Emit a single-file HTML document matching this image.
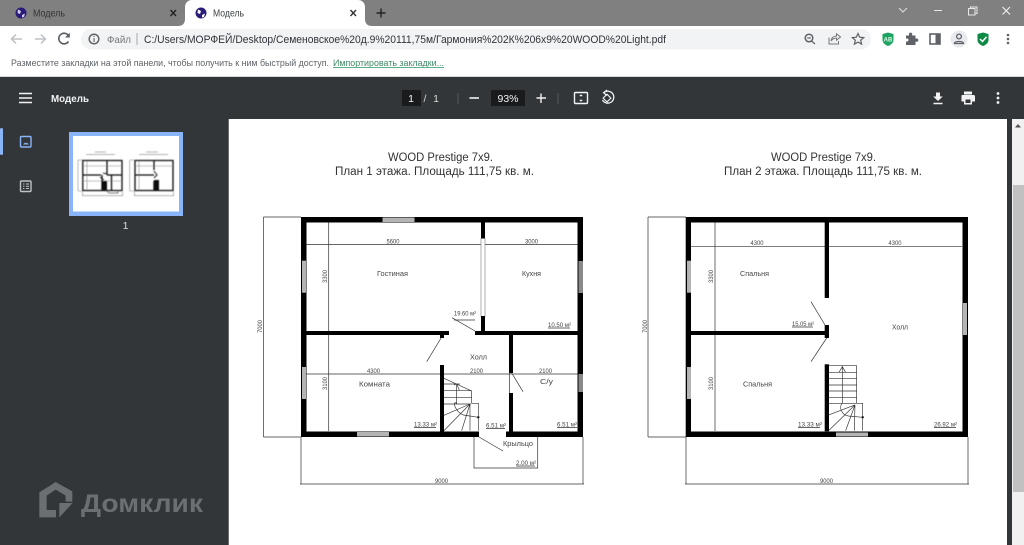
<!DOCTYPE html>
<html lang="ru">
<head>
<meta charset="utf-8">
<title>Модель</title>
<style>
html,body{margin:0;padding:0;background:#fff;overflow:hidden;width:1024px;height:545px}
svg{display:block;filter:blur(.3px)}
text{font-family:"Liberation Sans","DejaVu Sans",sans-serif}
.t{font-size:8px;fill:#555;text-anchor:start}
.d{font-size:6px;fill:#444}
.r{font-size:7.5px;fill:#444}
.ttl{font-size:11.5px;fill:#333}
.l{stroke:#333;stroke-width:.7;fill:none}
.ic{stroke:#5f6368;stroke-width:1.5;fill:none}
</style>
</head>
<body>
<svg width="1024" height="545" viewBox="0 0 1024 545" xmlns="http://www.w3.org/2000/svg">
<defs>
<filter id="soft" x="-5%" y="-5%" width="110%" height="110%"><feGaussianBlur stdDeviation=".45"/></filter>
<g id="p1">
  <g class="l">
    <path d="M263.500 217H301M263.500 217V437M263.500 437H301M301 437V484M583 437V484M300 484H584"/>
    <path d="M306 244.500H578M306 374H578M328.700 222V431"/>
    <path d="M452 317.700L475 331M441.700 337L426.700 361.700M511.700 373L523 391.700M479 437L503 451"/>
    <path d="M474 437V468H537.700V437"/>
    <path d="M509.500 373V393"/>
  </g>
  <path fill="#000" d="M301 217h282v220h-77v-5.500h71.500V222.500H306.500V431.500H479V437H301Z"/>
  <rect x="481" y="222" width="4" height="16.500" fill="#000"/>
  <rect x="481" y="238.500" width="4" height="78" fill="#fff" stroke="#777" stroke-width=".6"/>
  <rect x="481" y="316" width="4" height="17" fill="#000"/>
  <rect x="306" y="331" width="143" height="4" fill="#000"/>
  <rect x="475" y="331" width="103" height="4" fill="#000"/>
  <rect x="440" y="335" width="4" height="3" fill="#000"/>
  <rect x="509" y="335" width="4" height="38" fill="#000"/>
  <rect x="509" y="393" width="4" height="39" fill="#000"/>
  <rect x="440" y="365" width="4" height="67" fill="#000"/>
  <g fill="#b4b4b4">
    <rect x="382.500" y="217.500" width="32" height="4.500"/>
    <rect x="302" y="260.700" width="4" height="32"/>
    <rect x="302" y="367" width="4" height="32"/>
    <rect x="357" y="432" width="32" height="4.500"/>
  </g>
  <g fill="#8a8a8a">
    <rect x="578.500" y="261" width="4.500" height="32"/>
    <rect x="578.500" y="374" width="4.500" height="18"/>
  </g>
  <g transform="translate(255 340) scale(.3333)" fill="none" stroke="#333" stroke-width="2">
    <path d="M567 115L650 153V190H670V272M567 132H615M567 152H650M567 172H650M567 192H648M605 132V192"/>
    <path d="M645 192L567 272M645 192L567 226M645 192L620 272M645 192L645 272M597 135L605 132L613 150M605 190C590 180 600 215 625 225L670 232"/>
  </g>
  <circle cx="478.300" cy="417.300" r="1.200" fill="#111"/>
  <g stroke="#333" stroke-width=".7" fill="none">
    <path d="M454 320H475M414 427.500H436M486 428.500H505M557 427.500H577M548 328H570M516 466H535"/>
  </g>
</g>
<g id="p2">
  <g class="l">
    <path d="M648 217H686M648 217V437M648 437H686M686 437V484M968 437V484M685 484H969"/>
    <path d="M691 246.300H962M715 222V431"/>
    <path d="M811 301.700L825 325M826.700 338L811 361.700"/>
  </g>
  <path fill="#000" fill-rule="evenodd" d="M685.700 217H968V437H685.700ZM691 222.500V431.500H962.500V222.500Z"/>
  <rect x="824.700" y="222" width="4.300" height="76" fill="#000"/>
  <rect x="824.700" y="325" width="4.300" height="13" fill="#000"/>
  <rect x="690" y="331" width="135" height="4" fill="#000"/>
  <rect x="824.700" y="364.300" width="4.300" height="67" fill="#000"/>
  <g fill="#b4b4b4">
    <rect x="687" y="260.700" width="4" height="32"/>
    <rect x="687" y="367" width="4" height="32"/>
    <rect x="963" y="303" width="4" height="32"/>
    <rect x="836" y="432.500" width="32" height="4"/>
  </g>
  <g transform="translate(635 340) scale(.3333)" fill="none" stroke="#333" stroke-width="2">
    <path d="M581 77H665V190H683V272M581 97H665M581 115H665M581 135H665M581 153H665M581 172H665M581 190H665M622 77V190M612 97L622 80L632 97"/>
    <path d="M660 195L581 272M660 195L581 225M660 195L632 272M660 195L658 272M622 190C610 200 620 225 640 228L683 232"/>
  </g>
  <circle cx="862.700" cy="417.300" r="1.200" fill="#111"/>
  <path class="l" d="M792 327H813M798 427.500H820M934 427.500H956"/>
</g>
</defs>

<!-- Tab strip -->
<rect width="1024" height="26" fill="#808080"/>
<path d="M178 26C183 26 185 23 185 19V7C185 3 188 0 192 0H358C362 0 365 3 365 7V19C365 23 367 26 372 26Z" fill="#fff"/>
<g>
  <circle cx="21" cy="13" r="5.500" fill="#2a1b78"/>
  <path d="M18 9.500L21 11L20 14L17.500 13ZM22 15L25 13.500L24 17L22 17.500Z" fill="#cfd0e8"/>
  <circle cx="201" cy="13" r="5.500" fill="#2a1b78"/>
  <path d="M198 9.500L201 11L200 14L197.500 13ZM202 15L205 13.500L204 17L202 17.500Z" fill="#fff"/>
</g>
<text x="33" y="16.500" font-size="10" fill="#333" textLength="32" lengthAdjust="spacingAndGlyphs">Модель</text>
<text x="213" y="16.500" font-size="10" fill="#3c4043" textLength="31" lengthAdjust="spacingAndGlyphs">Модель</text>
<path d="M170.500 10L176 16M176 10L170.500 16" stroke="#222" stroke-width="1.400"/>
<path d="M350.500 10L356 16M356 10L350.500 16" stroke="#333" stroke-width="1.400"/>
<path d="M381 8.500V17.500M376.500 13H385.500" stroke="#222" stroke-width="1.400"/>
<path d="M899 8L903 12L907 8" stroke="#e0e0e0" fill="none"/>
<path d="M934 10.500H942" stroke="#e8e8e8"/>
<path d="M968.500 8.500h6.500v6.500h-6.500zM970.500 8.500v-1.500h6.500v6.500h-2" stroke="#e8e8e8" fill="none"/>
<path d="M1002.500 7L1010 14.500M1010 7L1002.500 14.500" stroke="#f0f0f0" stroke-width="1.100"/>

<!-- Address row -->
<rect y="26" width="1024" height="24" fill="#fff"/>
<path d="M22 39H11.500M16 34.500L11.500 39L16 43.500" stroke="#bdc1c6" stroke-width="1.500" fill="none"/>
<path d="M35 39H45.500M41 34.500L45.500 39L41 43.500" stroke="#bdc1c6" stroke-width="1.500" fill="none"/>
<path d="M68.500 41.500A5.300 5.300 0 1 1 69 36.500" stroke="#5a5e62" stroke-width="1.600" fill="none"/>
<path d="M69.800 32.800V37.500H65Z" fill="#5a5e62"/>
<rect x="81" y="29" width="790" height="20.500" rx="10.250" fill="#f1f3f4"/>
<circle cx="94" cy="39" r="4.800" class="ic" stroke-width="1.100"/>
<path d="M94 38V42M94 35.800V37" stroke="#5f6368" stroke-width="1.100"/>
<text x="107" y="43" font-size="10.500" fill="#777" textLength="24" lengthAdjust="spacingAndGlyphs">Файл</text>
<path d="M137 33V45" stroke="#aaa"/>
<text x="144" y="43" font-size="11" fill="#30343a" textLength="522" lengthAdjust="spacingAndGlyphs">C:/Users/МОРФЕЙ/Desktop/Семеновское%20д.9%20111,75м/Гармония%202К%206х9%20WOOD%20Light.pdf</text>
<circle cx="809" cy="38" r="3.800" class="ic" stroke-width="1.200"/>
<path d="M811.500 41L815 44M807.200 38H810.800" stroke="#5f6368" stroke-width="1.200"/>
<path d="M829 37.500V44H838.500V41M831 41C831.500 37.500 834 36 836.500 36V33.800L840.500 37L836.500 40.200V38C834.500 38 832.500 39 831 41Z" stroke="#777" stroke-width="1" fill="none"/>
<path d="M858 33.500L859.700 37.200L863.700 37.600L860.700 40.200L861.600 44.200L858 42.100L854.400 44.200L855.300 40.200L852.300 37.600L856.300 37.200Z" stroke="#5f6368" stroke-width="1.200" fill="none"/>
<path d="M882.500 34L888 32.500L893.500 34V40C893.500 43 890.500 45 888 46C885.500 45 882.500 43 882.500 40Z" fill="#1da462"/>
<text x="888" y="41.500" font-size="6" fill="#dff5e8" text-anchor="middle" font-weight="bold">AB</text>
<path d="M906 35.500H909V34.200A1.600 1.600 0 0 1 912.200 34.200V35.500H915.500V38.500H916.700A1.600 1.600 0 0 1 916.700 41.700H915.500V45H906V41.500H907.500A1.600 1.600 0 0 0 907.500 38.500H906Z" fill="#5f6368"/>
<rect x="930" y="34" width="10" height="10" fill="none" stroke="#5f6368" stroke-width="1.600"/>
<rect x="935.500" y="34" width="4.500" height="10" fill="#5f6368"/>
<circle cx="959" cy="39" r="8.500" fill="#e8eaed"/>
<circle cx="959" cy="36.500" r="2.400" fill="none" stroke="#5f6368" stroke-width="1.300"/>
<path d="M954.500 43.500C954.500 40.800 963.500 40.800 963.500 43.500Z" fill="none" stroke="#5f6368" stroke-width="1.300"/>
<path d="M977.500 34L983 32.500L988.500 34V40C988.500 43 985.500 45 983 46C980.500 45 977.500 43 977.500 40Z" fill="#0b8a43"/>
<path d="M980 39L982.500 41.500L986.500 36.800" stroke="#fff" stroke-width="1.500" fill="none"/>
<g fill="#5f6368"><circle cx="1008" cy="35" r="1.300"/><circle cx="1008" cy="39" r="1.300"/><circle cx="1008" cy="43" r="1.300"/></g>

<!-- Bookmark row -->
<rect y="50" width="1024" height="26" fill="#fff"/>
<text x="11" y="66" font-size="9.500" fill="#5f6368" textLength="318" lengthAdjust="spacingAndGlyphs">Разместите закладки на этой панели, чтобы получить к ним быстрый доступ.</text>
<text x="333" y="66" font-size="9.500" fill="#3f8a66" textLength="111" lengthAdjust="spacingAndGlyphs">Импортировать закладки...</text>
<path d="M333 67.500H444" stroke="#5fb08a"/>
<rect y="76" width="1024" height="1" fill="#d8d8d8"/>

<!-- PDF viewer -->
<rect y="77" width="1024" height="468" fill="#323639"/>
<rect x="228" y="119" width="779" height="426" fill="#fff"/>
<rect x="228" y="119" width="1" height="426" fill="#6a6d70"/>
<rect x="1012" y="119" width="12" height="426" fill="#f1f1f1"/>
<rect x="1013" y="185" width="11" height="307" fill="#c1c1c1"/>
<path d="M1015 127.500L1018 124L1021 127.500Z" fill="#505050"/>

<!-- PDF toolbar -->
<path d="M19 93.500H32M19 98H32M19 102.500H32" stroke="#f1f3f4" stroke-width="1.600"/>
<text x="51" y="102" font-size="10.500" font-weight="bold" fill="#f1f3f4" textLength="38" lengthAdjust="spacingAndGlyphs">Модель</text>
<rect x="402" y="90" width="19" height="16" fill="#191b1c"/>
<text x="411" y="102" font-size="10.500" fill="#f1f3f4" text-anchor="middle">1</text>
<text x="425" y="102" font-size="10.500" fill="#d8d8d8" text-anchor="middle">/</text>
<text x="436" y="102" font-size="10.500" fill="#d8d8d8" text-anchor="middle">1</text>
<path d="M458 93V104M558 93V104" stroke="#55595c"/>
<path d="M469.500 98H479" stroke="#f1f3f4" stroke-width="1.600"/>
<rect x="491" y="90" width="34" height="16" fill="#191b1c"/>
<text x="508" y="102" font-size="10.500" fill="#f1f3f4" text-anchor="middle">93%</text>
<path d="M541 93.500V103M536.500 98H546" stroke="#f1f3f4" stroke-width="1.400"/>
<rect x="574.500" y="92.500" width="13" height="11" rx="1" fill="none" stroke="#f1f3f4" stroke-width="1.400"/>
<path d="M579.500 96L581 94.500L582.500 96ZM579.500 100L581 101.500L582.500 100Z" fill="#f1f3f4" stroke="#f1f3f4" stroke-width=".5"/>
<path d="M604 92.500A6 6 0 1 1 602.500 100" fill="none" stroke="#f1f3f4" stroke-width="1.300"/>
<path d="M607 90L603.500 92.800L607 95.500" fill="none" stroke="#f1f3f4" stroke-width="1.200"/>
<rect x="604.300" y="95.300" width="5.500" height="5.500" transform="rotate(45 607 98)" fill="none" stroke="#f1f3f4" stroke-width="1.100"/>
<path d="M936 92.500H940V96.500H942.800L938 101L933.200 96.500H936ZM933.500 102.700H942.500V104.300H933.500Z" fill="#f1f3f4"/>
<path d="M964 91.500H972V94.500H964ZM962 95H974A1.500 1.500 0 0 1 975 96.500V101.500H972V104.500H964V101.500H961.500V96.500A1.500 1.500 0 0 1 962 95Z" fill="#f1f3f4"/>
<rect x="965.500" y="99.500" width="5" height="3.500" fill="#323639"/>
<g fill="#f1f3f4"><circle cx="998" cy="93.500" r="1.400"/><circle cx="998" cy="98" r="1.400"/><circle cx="998" cy="102.500" r="1.400"/></g>

<!-- Sidebar -->
<rect x="0" y="128" width="3" height="27" rx="1.500" fill="#8ab4f8"/>
<rect x="20.500" y="136.500" width="10.500" height="10.500" rx="1" fill="none" stroke="#8ab4f8" stroke-width="1.400"/>
<path d="M23 144.500L25 142.500L26 143.500L27 142.500L29 144.500Z" fill="#8ab4f8"/>
<rect x="20.500" y="181" width="10.500" height="10.500" rx="1" fill="none" stroke="#bfc2c5" stroke-width="1.400"/>
<path d="M23 184H24.500M26 184H29M23 186.300H24.500M26 186.300H29M23 188.500H24.500M26 188.500H29" stroke="#bfc2c5"/>
<rect x="69" y="132" width="114" height="84" fill="#8ab4f8"/>
<rect x="73" y="136" width="106" height="75.500" fill="#fff"/>
<g filter="url(#soft)">
  <g fill="none" stroke="#888" stroke-width=".6">
    <path d="M78 160H83M78 160V191M78 191H83M82.500 191V196M122.500 191V196M82 195.700H123M87 160V191M83 166H122M83 181H122"/>
    <path d="M129.700 160H135M129.700 160V191M129.700 191H135M134.500 191V196M173.500 191V196M134 195.700H174M139 160V191M135 166H173"/>
    <path d="M95 152H106M86 154.500H115M146 152H158M139 154.500H168" stroke="#999" stroke-width=".8"/>
  </g>
  <g fill="none" stroke="#111" stroke-width="1.300">
    <path d="M82.800 160.500H122V190.500H82.800ZM107 160.500V175M83 175H101M107 175H122M111.500 175V190.500M102 175V190.500"/>
    <path d="M135 160.500H173V190.500H135ZM154 160.500V170M135 175H154M154 181V190.500"/>
  </g>
  <path d="M102 181h5v9h-5zM154 180h5v10h-5z" fill="#111"/>
  <path d="M103 173L107 174M100 177L104 180M154 171L157 175L154 178" stroke="#222" stroke-width="1" fill="none"/>
  <path d="M106 190.500L109 193H118V190.500" stroke="#555" stroke-width=".8" fill="none"/>
</g>
<text x="125.500" y="229" font-size="10.500" fill="#d8dbde" text-anchor="middle">1</text>

<!-- Watermark -->
<g transform="translate(0 460) scale(.3333)" fill="#6b6f72">
  <path d="M118 97L167 66L217 94V125H197V107L167 89L140 107V150H168V172H118Z"/>
  <path d="M218 129H178V172Z"/>
</g>
<text x="81" y="512" font-size="25" font-weight="bold" fill="#6b6f72" textLength="122" lengthAdjust="spacingAndGlyphs">Домклик</text>

<!-- Drawing -->
<use href="#p1"/>
<use href="#p2"/>

<text class="ttl" x="388" y="161" textLength="105" lengthAdjust="spacingAndGlyphs">WOOD Prestige 7x9.</text>
<text class="ttl" x="335" y="175" textLength="199" lengthAdjust="spacingAndGlyphs">План 1 этажа. Площадь 111,75 кв. м.</text>
<text class="ttl" x="771" y="161" textLength="105" lengthAdjust="spacingAndGlyphs">WOOD Prestige 7x9.</text>
<text class="ttl" x="724" y="175" textLength="198" lengthAdjust="spacingAndGlyphs">План 2 этажа. Площадь 111,75 кв. м.</text>

<!-- Plan 1 labels -->
<g class="d">
  <text x="386.500" y="243.500" textLength="13" lengthAdjust="spacingAndGlyphs">5600</text>
  <text x="525" y="243.500" textLength="13" lengthAdjust="spacingAndGlyphs">3000</text>
  <text x="367" y="373" textLength="13" lengthAdjust="spacingAndGlyphs">4300</text>
  <text x="470" y="373" textLength="13" lengthAdjust="spacingAndGlyphs">2100</text>
  <text x="539" y="373" textLength="13" lengthAdjust="spacingAndGlyphs">2100</text>
  <text x="435" y="483" textLength="13" lengthAdjust="spacingAndGlyphs">9000</text>
  <text transform="translate(327 283) rotate(-90)" textLength="13" lengthAdjust="spacingAndGlyphs">3300</text>
  <text transform="translate(327 390) rotate(-90)" textLength="13" lengthAdjust="spacingAndGlyphs">3100</text>
  <text transform="translate(262 333) rotate(-90)" textLength="13" lengthAdjust="spacingAndGlyphs">7000</text>
  <text x="454" y="315.500" textLength="22" lengthAdjust="spacingAndGlyphs">19.60 м²</text>
  <text x="548" y="327" textLength="23" lengthAdjust="spacingAndGlyphs">10.50 м²</text>
  <text x="414" y="426.500" textLength="23" lengthAdjust="spacingAndGlyphs">13.33 м²</text>
  <text x="486" y="427.500" textLength="20" lengthAdjust="spacingAndGlyphs">6.51 м²</text>
  <text x="557" y="426.500" textLength="20" lengthAdjust="spacingAndGlyphs">6.51 м²</text>
  <text x="516" y="465" textLength="20" lengthAdjust="spacingAndGlyphs">2.00 м²</text>
</g>
<g class="r">
  <text x="377" y="276" textLength="31" lengthAdjust="spacingAndGlyphs">Гостиная</text>
  <text x="522" y="276" textLength="19" lengthAdjust="spacingAndGlyphs">Кухня</text>
  <text x="470" y="359.500" textLength="17" lengthAdjust="spacingAndGlyphs">Холл</text>
  <text x="359" y="386.500" textLength="31" lengthAdjust="spacingAndGlyphs">Комната</text>
  <text x="540" y="384" textLength="13" lengthAdjust="spacingAndGlyphs">С/у</text>
  <text x="503" y="446" textLength="30" lengthAdjust="spacingAndGlyphs">Крыльцо</text>
</g>

<!-- Plan 2 labels -->
<g class="d">
  <text x="750.500" y="245" textLength="13" lengthAdjust="spacingAndGlyphs">4300</text>
  <text x="888.500" y="245" textLength="13" lengthAdjust="spacingAndGlyphs">4300</text>
  <text x="820" y="483" textLength="13" lengthAdjust="spacingAndGlyphs">9000</text>
  <text transform="translate(713 283) rotate(-90)" textLength="13" lengthAdjust="spacingAndGlyphs">3300</text>
  <text transform="translate(713 390) rotate(-90)" textLength="13" lengthAdjust="spacingAndGlyphs">3100</text>
  <text transform="translate(647 333) rotate(-90)" textLength="13" lengthAdjust="spacingAndGlyphs">7000</text>
  <text x="792" y="326" textLength="22" lengthAdjust="spacingAndGlyphs">15.05 м²</text>
  <text x="798" y="426.500" textLength="24" lengthAdjust="spacingAndGlyphs">13.33 м²</text>
  <text x="934" y="426.500" textLength="23" lengthAdjust="spacingAndGlyphs">26.92 м²</text>
</g>
<g class="r">
  <text x="740" y="276" textLength="29" lengthAdjust="spacingAndGlyphs">Спальня</text>
  <text x="892" y="329.500" textLength="16" lengthAdjust="spacingAndGlyphs">Холл</text>
  <text x="743" y="386.500" textLength="29" lengthAdjust="spacingAndGlyphs">Спальня</text>
</g>
</svg>
</body>
</html>
